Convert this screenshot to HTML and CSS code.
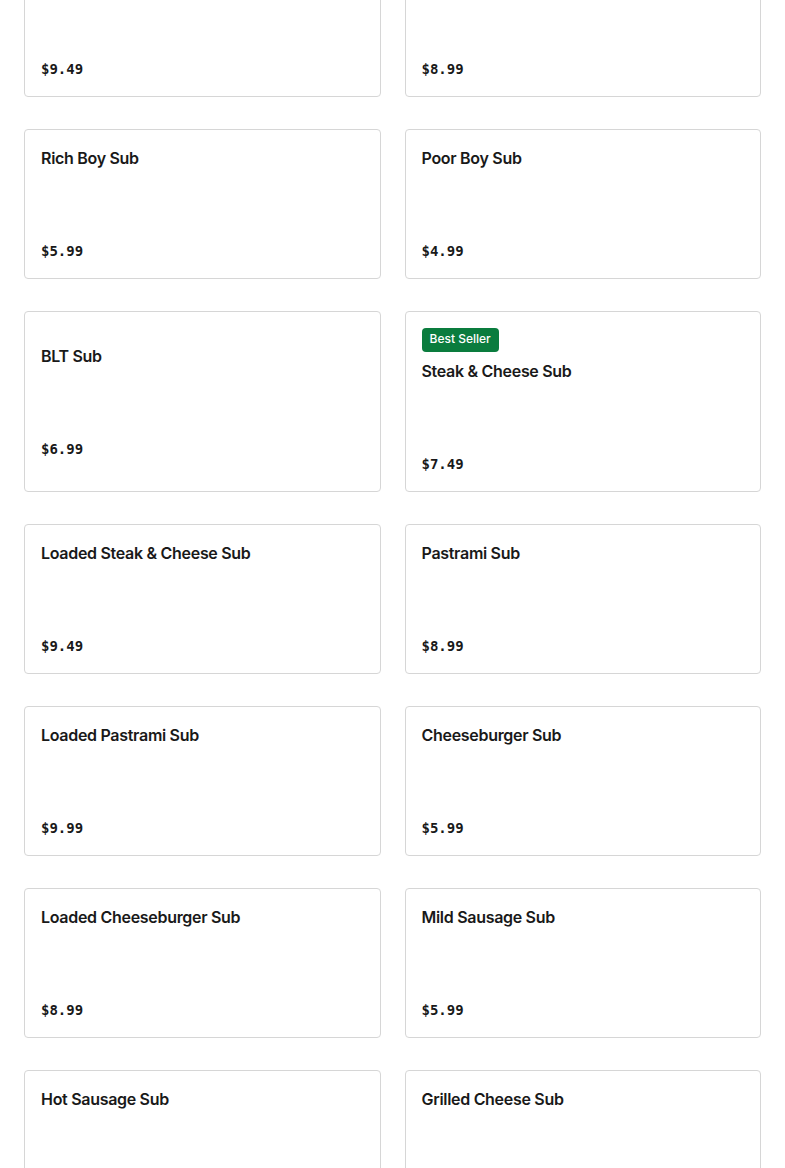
FILE: index.html
```html
<!DOCTYPE html>
<html lang="en">
<head>
<meta charset="utf-8">
<title>Menu</title>
<link rel="stylesheet" href="styles.css">
</head>
<body>
<main class="menu">
  <section class="grid">
    <article class="card"><div class="content"><h3 class="title">Italian Sub</h3><p class="desc"></p><div class="price">$9.49</div></div></article>
    <article class="card"><div class="content"><h3 class="title">Ham Sub</h3><p class="desc"></p><div class="price">$8.99</div></div></article>

    <article class="card"><div class="content"><h3 class="title">Rich Boy Sub</h3><p class="desc"></p><div class="price">$5.99</div></div></article>
    <article class="card"><div class="content"><h3 class="title">Poor Boy Sub</h3><p class="desc"></p><div class="price">$4.99</div></div></article>

    <article class="card"><div class="content"><h3 class="title">BLT Sub</h3><p class="desc"></p><div class="price">$6.99</div></div></article>
    <article class="card"><div class="content"><span class="badge">Best Seller</span><h3 class="title">Steak &amp; Cheese Sub</h3><p class="desc"></p><div class="price">$7.49</div></div></article>

    <article class="card"><div class="content"><h3 class="title">Loaded Steak &amp; Cheese Sub</h3><p class="desc"></p><div class="price">$9.49</div></div></article>
    <article class="card"><div class="content"><h3 class="title">Pastrami Sub</h3><p class="desc"></p><div class="price">$8.99</div></div></article>

    <article class="card"><div class="content"><h3 class="title">Loaded Pastrami Sub</h3><p class="desc"></p><div class="price">$9.99</div></div></article>
    <article class="card"><div class="content"><h3 class="title">Cheeseburger Sub</h3><p class="desc"></p><div class="price">$5.99</div></div></article>

    <article class="card"><div class="content"><h3 class="title">Loaded Cheeseburger Sub</h3><p class="desc"></p><div class="price">$8.99</div></div></article>
    <article class="card"><div class="content"><h3 class="title">Mild Sausage Sub</h3><p class="desc"></p><div class="price">$5.99</div></div></article>

    <article class="card"><div class="content"><h3 class="title">Hot Sausage Sub</h3><p class="desc"></p><div class="price">$5.99</div></div></article>
    <article class="card"><div class="content"><h3 class="title">Grilled Cheese Sub</h3><p class="desc"></p><div class="price">$4.99</div></div></article>
  </section>
</main>
</body>
</html>
```

FILE: styles.css
```css
* { box-sizing: border-box; }
html, body { margin: 0; padding: 0; background: #ffffff; }
body {
  font-family: Inter, "Noto Sans", "Liberation Sans", sans-serif;
  color: #191919;
  overflow: hidden;
}
.menu {
  padding: 0 24px;
  margin-top: -53px;
}
.grid {
  display: grid;
  grid-template-columns: 1fr 1fr;
  column-gap: 24px;
  row-gap: 32px;
  align-items: stretch;
}
.card {
  border: 1px solid #d6d6d6;
  border-radius: 4px;
  padding: 16px;
  display: flex;
  flex-direction: column;
  justify-content: center;
  background: #fff;
}
.content {
  display: flex;
  flex-direction: column;
  align-items: flex-start;
}
.badge {
  display: inline-block;
  background: #0a7c3e;
  color: #ffffff;
  font-size: 12px;
  font-weight: 500;
  line-height: 16px;
  padding: 3px 8px 5px;
  border-radius: 4px;
  margin-bottom: 7px;
}
.title {
  margin: 0;
  font-size: 16px;
  font-weight: 600;
  line-height: 24px;
  letter-spacing: -0.3px;
}
.desc {
  margin: 0;
  height: 70px;
}
.price {
  font-family: "DejaVu Sans Mono", "Liberation Mono", monospace;
  font-size: 14px;
  font-weight: 700;
  line-height: 22px;
  color: #191919;
}
```
